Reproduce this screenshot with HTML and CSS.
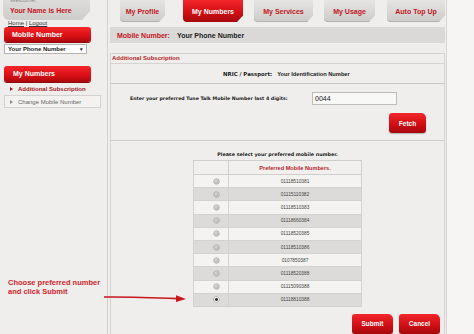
FILE: index.html
```html
<html>

<head>
	<title>My Numbers - Additional Subscription</title>
	<link rel="stylesheet" href="styles.css">
</head>
<body>
	<div class="page">
		<aside class="sidebar">
			<div class="welcome">
				<span class="welcome-hi">Welcome,</span>
				<span class="welcome-name">Your Name is Here</span>
			</div>
			<div class="links"><a href="#">Home</a> | <a href="#">Logout</a></div>
			<div class="red-bar">Mobile Number</div>
			<div class="phone-select"><span>Your Phone Number</span><span class="caret">&#9662;</span></div>
			<div class="red-bar menu-title">My Numbers</div>
			<ul class="menu">
				<li class="active"><span class="tri"></span>Additional Subscription</li>
				<li class="boxed"><span class="tri"></span>Change Mobile Number</li>
			</ul>
		</aside>
		<main class="main">
			<nav class="tabs">
				<a class="tab tab-profile" href="#">My Profile</a>
				<a class="tab tab-numbers current" href="#">My Numbers</a>
				<a class="tab tab-services" href="#">My Services</a>
				<a class="tab tab-usage" href="#">My Usage</a>
				<a class="tab tab-topup" href="#">Auto Top Up</a>
			</nav>
			<div class="number-bar">
				<span class="nb-label">Mobile Number:</span>
				<span class="nb-value">Your Phone Number</span>
			</div>
			<section class="panel">
				<div class="panel-head">Additional Subscription</div>
				<div class="nric">
					<span class="nric-label">NRIC / Passport:</span>
					<span class="nric-value">Your Identification Number</span>
				</div>
				<div class="fetch-area">
					<div class="fetch-row">
						<label for="digits">Enter your preferred Tune Talk Mobile Number last 4 digits:</label>
						<input type="text" id="digits" value="0044">
					</div>
					<div class="btn-row fetch-btns">
						<button type="button" class="btn">Fetch</button>
					</div>
				</div>
				<div class="choose">
					<p class="choose-title">Please select your preferred mobile number.</p>
					<table class="numbers">
						<tr><th class="pick"></th><th>Preferred Mobile Numbers.</th></tr>
						<tr><td class="pick"><span class="radio"></span></td><td>01118510381</td></tr>
						<tr><td class="pick"><span class="radio"></span></td><td>01115110382</td></tr>
						<tr><td class="pick"><span class="radio"></span></td><td>01118510383</td></tr>
						<tr><td class="pick"><span class="radio"></span></td><td>01118660384</td></tr>
						<tr><td class="pick"><span class="radio"></span></td><td>01118520385</td></tr>
						<tr><td class="pick"><span class="radio"></span></td><td>01118510386</td></tr>
						<tr><td class="pick"><span class="radio"></span></td><td>0107850387</td></tr>
						<tr><td class="pick"><span class="radio"></span></td><td>01118520388</td></tr>
						<tr><td class="pick"><span class="radio"></span></td><td>01115090388</td></tr>
						<tr><td class="pick"><span class="radio checked"></span></td><td>01118810388</td></tr>
					</table>
					<div class="btn-row submit-btns">
						<button type="button" class="btn">Submit</button>
						<button type="button" class="btn">Cancel</button>
					</div>
				</div>
			</section>
		</main>
	</div>
	<div class="callout">
		<p>Choose preferred number<br>and click Submit</p>
	</div>
	<svg class="arrow" width="82" height="10" viewBox="0 0 82 10">
		<path d="M0 4 C 25 3.6, 50 4.6, 74 5.6" fill="none" stroke="#c8161d" stroke-width="1.6"/>
		<polygon points="72,2.2 82,6 72,9" fill="#c8161d"/>
	</svg>
</body>

</html>
```

FILE: styles.css
```css
body { margin: 0; background: #f6f5f3; font-family: "Liberation Sans", Arial, sans-serif; color: #1b1b1b; position: relative; }
.page { display: flex; width: 447px; height: 334px; overflow: hidden; }

/* left column */
.sidebar { width: 107px; border-right: 1px solid #d2d1cf; background: #efeeec; }
.welcome { margin-left: 3px; width: 87px; height: 20px; box-sizing: border-box; padding-left: 7px; overflow: hidden;
	background: linear-gradient(#dddcda, #cecdcb); border-radius: 0 0 3px 6px;
	clip-path: polygon(0 0, 100% 0, 100% 55%, calc(100% - 8px) 100%, 0 100%); }
.welcome-hi { display: block; margin-top: -4px; height: 8px; line-height: 8px; font-size: 6px; color: #8a8987; }
.welcome-name { display: block; margin-top: 3px; line-height: 8px; font-size: 7px; font-weight: bold; color: #c4161c; }
.links { height: 7px; line-height: 7px; padding-left: 8px; font-size: 6px; color: #333; }
.links a { color: #333; }
.red-bar { margin-left: 4px; width: 87px; height: 15px; box-sizing: border-box; padding-left: 8px; border-radius: 3px;
	background: linear-gradient(#f4252a, #d80f14 60%, #a9090d); box-shadow: 0 1px 0 #8c0a0d;
	color: #fff; font-size: 7px; font-weight: bold; line-height: 15px; }
.phone-select { margin: 2px 0 0 4px; width: 83px; height: 10px; box-sizing: border-box; padding: 0 3px;
	border: 1px solid #b5b4b2; background: #fff; display: flex; justify-content: space-between; align-items: center;
	font-size: 6px; font-weight: bold; }
.caret { font-size: 5px; color: #333; }
.menu-title { margin-top: 12px; height: 16px; line-height: 16px; padding-left: 9px; }
.menu { list-style: none; margin: 1px 0 0 4px; padding: 0; width: 97px; }
.menu li { height: 12px; box-sizing: border-box; display: flex; align-items: center; padding-left: 6px; font-size: 6px; }
.menu .active { color: #a3171d; font-weight: bold; }
.menu .boxed { height: 13px; border: 1px solid #d3d2d0; background: #f3f2f0; color: #666; padding-left: 5px; }
.menu .boxed .tri { color: #8d8c8a; }
.tri { width: 0; height: 0; margin-right: 5px; border-left: 3px solid currentColor; border-top: 2.5px solid transparent; border-bottom: 2.5px solid transparent; }

/* right column */
.main { width: 338px; border-right: 1px solid #d6d5d3; background: #efeeec; }
.tabs { display: flex; height: 23px; padding-left: 12px; }
.tab { height: 22px; display: flex; align-items: center; justify-content: center; text-decoration: none;
	background: linear-gradient(#e6e5e3, #cccbc9); border-radius: 0 0 3px 4px; box-shadow: inset 0 -1px 0 #b3b2b0;
	clip-path: polygon(0 0, 100% 0, 100% 70%, calc(100% - 6px) 100%, 0 100%);
	color: #c4161c; font-size: 7px; font-weight: bold; }
.tab.current { background: linear-gradient(#f2262b, #d20f14 55%, #a5080c); color: #fff; box-shadow: none; }
.tab-profile { width: 45px; margin-right: 18px; }
.tab-numbers { width: 60px; margin-right: 11px; }
.tab-services { width: 59px; margin-right: 11px; }
.tab-usage { width: 51px; margin-right: 12px; }
.tab-topup { width: 58px; }
.number-bar { margin: 4px 1px 0 2px; height: 16px; padding-left: 7px; display: flex; align-items: center;
	background: #dad9d7; font-size: 7px; font-weight: bold; }
.nb-label { width: 60px; color: #c4161c; }

.panel { margin: 10px 1px 0 2px; border: 1px solid #d4d3d1; border-bottom: none; }
.panel-head { height: 9px; line-height: 9px; padding-left: 1px; border-bottom: 1px solid #d4d3d1; font-size: 6px; font-weight: bold; color: #b51c22; }
.nric { height: 19px; padding-left: 112px; display: flex; align-items: center; border-bottom: 1px solid #c8c7c5; font-weight: bold; }
.nric-label { margin-right: 5px; font-family: "DejaVu Sans", Verdana, sans-serif; font-size: 5.4px; }
.nric-value { font-size: 5.7px; }
.fetch-area { height: 41px; padding: 8px 0 7px; border-bottom: 1px solid #cdccca; }
.fetch-row { height: 13px; padding-left: 19px; display: flex; align-items: center; }
.fetch-row label { width: 182px; font-family: "DejaVu Sans", Verdana, sans-serif; font-size: 4.7px; font-weight: bold; }
.fetch-row input { width: 85px; height: 13px; box-sizing: border-box; padding: 0 2px; border: 1px solid #bdbcba; background: #f8f8f6; font: 7px "Liberation Sans", Arial, sans-serif; color: #222; }
.btn-row { display: flex; gap: 6px; }
.fetch-btns { margin-top: 8px; padding-left: 278px; }
.btn { width: 37px; height: 20px; padding: 0; border: 0; border-radius: 3px 5px 3px 3px;
	background: linear-gradient(#f2262b, #d10f14 55%, #a5080c); box-shadow: 0 1px 1px rgba(0, 0, 0, .25);
	color: #fff; font: bold 6.5px "Liberation Sans", Arial, sans-serif; }
.submit-btns { margin-top: 7px; padding-left: 241px; }
.submit-btns .btn { width: 41px; }

.choose { padding-top: 10px; }
.choose-title { margin: 0 0 0 82px; width: 169px; text-align: center; font: bold 4.8px/8px "DejaVu Sans", Verdana, sans-serif; }
.numbers { margin: 1px 0 0 82px; width: 169px; border-collapse: collapse; border: 1px solid #bebdbb; }
.numbers th { height: 14px; padding: 0; background: #f1f0ee; border: 1px solid #cfcecc; color: #b8272c; font-size: 5.6px; font-weight: bold; }
.numbers td { height: 13.2px; padding: 0; border: 1px solid #d3d2d0; text-align: center; color: #444; font-size: 4.8px; }
.numbers tr:nth-child(even) td { background: #f4f3f1; }
.numbers tr:nth-child(odd) td { background: #dcdbd9; }
.numbers .pick { width: 35px; padding-left: 11px; box-sizing: border-box; }
.radio { display: inline-block; width: 5px; height: 5px; border-radius: 50%; vertical-align: middle; background: radial-gradient(circle at 40% 35%, #d6d6d6, #a9a9a9); box-shadow: 0 0 0 0.5px #9a9a9a; }
.radio.checked { background: radial-gradient(circle, #333 0 1.2px, #e9e9e9 1.6px); }

/* annotation drawn over the page */
.callout { position: absolute; left: 8px; top: 278px; }
.callout p { margin: 0; font-size: 7.5px; line-height: 9px; font-weight: bold; color: #d3242b; }
.arrow { position: absolute; left: 104px; top: 293px; }
```
